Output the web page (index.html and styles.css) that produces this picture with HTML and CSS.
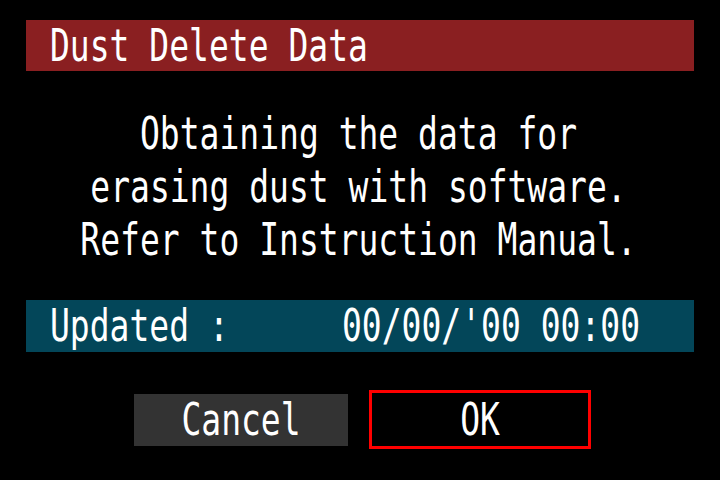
FILE: index.html
```html
<!DOCTYPE html>
<html lang="en">

<head>
    <meta charset="UTF-8">
    <meta name="viewport" content="width=device-width, initial-scale=1.0">
    <title>Dust Delete Data</title>
    <link rel="stylesheet" href="styles.css">
</head>

<body>
    <div class="screen">
        <div class="title-bar">
            <span class="lcd">Dust Delete Data</span>
        </div>

        <div class="message">
            <div class="line"><span class="lcd">Obtaining the data for</span></div>
            <div class="line"><span class="lcd">erasing dust with software.</span></div>
            <div class="line"><span class="lcd">Refer to Instruction Manual.</span></div>
        </div>

        <div class="status-bar">
            <span class="lcd">Updated :</span>
            <span class="lcd">00/00/'00 00:00</span>
        </div>

        <div class="buttons">
            <div class="btn btn-cancel"><span class="lcd">Cancel</span></div>
            <div class="btn btn-ok"><span class="lcd">OK</span></div>
        </div>
    </div>
</body>

</html>
```

FILE: styles.css
```css
body {
    margin: 0;
    padding: 0;
    background: #000;
    color: #fff;
    font-family: 'DejaVu Sans Mono', 'Liberation Mono', monospace;
    font-size: 33px;
}

.screen {
    width: 720px;
    height: 480px;
    padding-top: 20px;
    box-sizing: border-box;
}

/* camera font is tall and narrow */
.lcd {
    display: inline-block;
    white-space: pre;
    transform: scaleY(1.35);
}

.title-bar {
    margin: 0 26px;
    height: 51px;
    line-height: 52px;
    padding-left: 24px;
    background: #8a1f21;
}

.message {
    margin-top: 36px;
    padding-right: 3px;
    text-align: center;
}

.message .line {
    height: 53px;
    line-height: 53px;
}

.status-bar {
    margin: 34px 26px 0;
    height: 52px;
    line-height: 52px;
    padding: 0 54px 0 24px;
    background: #034659;
    display: flex;
    justify-content: space-between;
}

.buttons {
    margin-top: 38px;
    padding-left: 5px;
    display: flex;
    justify-content: center;
    align-items: center;
    gap: 21px;
}

.btn {
    box-sizing: border-box;
    text-align: center;
}

.btn-cancel {
    width: 214px;
    height: 52px;
    line-height: 52px;
    background: #333;
}

.btn-ok {
    width: 222px;
    height: 59px;
    line-height: 53px;
    border: 3px solid #ff0000;
}
```
